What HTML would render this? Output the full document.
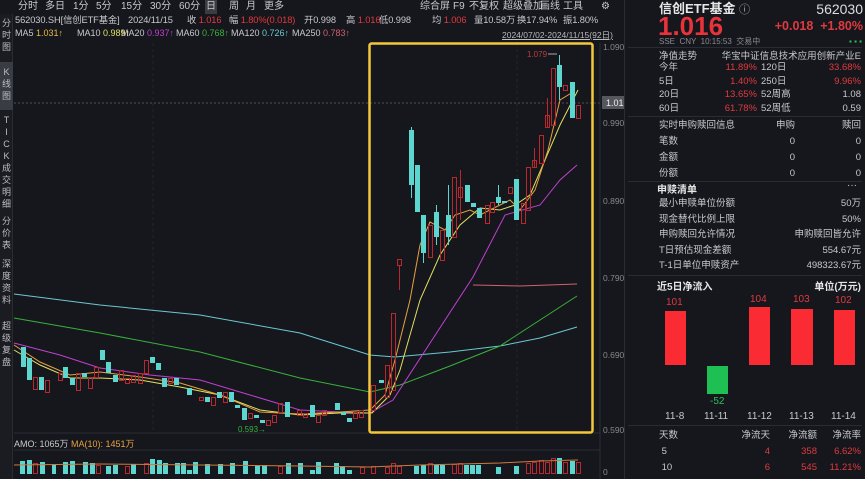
<!DOCTYPE html>
<html><head><meta charset="utf-8"><style>
*{margin:0;padding:0;box-sizing:border-box}
body{width:865px;height:479px;background:#15171d;overflow:hidden;position:relative;font-family:"Liberation Sans","Noto Sans CJK SC",sans-serif;color:#c8c9cc;font-size:10px}
.a{position:absolute;white-space:nowrap}
.r{color:#e03a3e}.g{color:#2fbf5a}.w{color:#e6e6e6}.gr{color:#8a8c92}
.side{position:absolute;left:0;top:14px;width:13px;height:465px;background:#1a1c22;border-right:1px solid #2a2c33}
.side div{position:absolute;left:0;width:13px;text-align:center;font-size:9px;line-height:12px;color:#bdbec2}
.rp{position:absolute;left:624px;top:0;width:241px;height:479px;background:#15171d;border-left:1px solid #2a2c33}
.hl{position:absolute;left:3px;right:3px;height:1px;background:#2a2c33}
.t{position:absolute;top:1px;font-size:10px;line-height:12px;white-space:nowrap}
.i{position:absolute;top:14px;font-size:9.3px;line-height:12px;white-space:nowrap;letter-spacing:-0.1px}
.m{position:absolute;top:28px;font-size:9px;line-height:11px;white-space:nowrap}
</style></head><body>
<div class="a" style="left:205px;top:0;width:12px;height:14px;background:#3a3c44"></div>
<span class="t" style="left:18px">分时</span><span class="t" style="left:45px">多日</span><span class="t" style="left:73px">1分</span><span class="t" style="left:96px">5分</span><span class="t" style="left:121px">15分</span><span class="t" style="left:150px">30分</span><span class="t" style="left:179px">60分</span><span class="t" style="left:206px">日</span><span class="t" style="left:229px">周</span><span class="t" style="left:246px">月</span><span class="t" style="left:264px">更多</span>
<span class="t" style="left:420px">综合屏</span><span class="t" style="left:453px">F9</span><span class="t" style="left:469px">不复权</span><span class="t" style="left:503px">超级叠加</span><span class="t" style="left:540px">画线</span><span class="t" style="left:563px">工具</span><span class="t" style="left:601px">⚙</span>
<span class="t" style="left:626px;color:#999">ⓘ &nbsp;›</span>
<span class="i" style="left:15px">562030.SH[信创ETF基金]</span><span class="i" style="left:128px">2024/11/15</span><span class="i" style="left:187px">收 <span class="r">1.016</span></span><span class="i" style="left:229px">幅 <span class="r">1.80%(0.018)</span></span><span class="i" style="left:304px">开0.998</span><span class="i" style="left:346px">高 <span class="r">1.016</span></span><span class="i" style="left:379px">低0.998</span><span class="i" style="left:432px">均 <span class="r">1.006</span></span><span class="i" style="left:474px">量10.58万</span><span class="i" style="left:517px">换17.94%</span><span class="i" style="left:563px">振1.80%</span>
<span class="m" style="left:15px">MA5 <span style="color:#e8b84a">1.031↑</span></span><span class="m" style="left:77px">MA10 <span style="color:#e0e060">0.989↑</span></span><span class="m" style="left:121px">MA20 <span style="color:#c040d0">0.937↑</span></span><span class="m" style="left:176px">MA60 <span style="color:#3ab03a">0.768↑</span></span><span class="m" style="left:231px">MA120 <span style="color:#6cc8d0">0.726↑</span></span><span class="m" style="left:292px">MA250 <span style="color:#d06070">0.783↑</span></span>
<div class="a" style="left:502px;top:29px;font-size:8.5px;text-decoration:underline;color:#bbb">2024/07/02-2024/11/15(92日)</div>
<div class="side">
<div style="top:3px;line-height:12px">分<br>时<br>图</div>
<div style="top:48px;height:48px;background:#3a3c44;padding-top:4px">K<br>线<br>图</div>
<div style="top:100px">T<br>I<br>C<br>K</div>
<div style="top:148px">成<br>交<br>明<br>细</div>
<div style="top:201px">分<br>价<br>表</div>
<div style="top:244px">深<br>度<br>资<br>料</div>
<div style="top:306px">超<br>级<br>复<br>盘</div>
</div>
<svg class="a" style="left:0;top:0" width="624" height="479" viewBox="0 0 624 479">
<line x1="14" y1="103" x2="600" y2="103" stroke="#666" stroke-dasharray="2,2" stroke-width="0.7"/>
<line x1="153" y1="43" x2="153" y2="433" stroke="#22242a" stroke-dasharray="3,3"/>
<line x1="517" y1="43" x2="517" y2="433" stroke="#22242a" stroke-dasharray="3,3"/>
<line x1="14" y1="433" x2="600" y2="433" stroke="#2c2e35"/>
<line x1="14" y1="450" x2="600" y2="450" stroke="#2c2e35"/>
<line x1="600" y1="43" x2="600" y2="479" stroke="#2c2e35"/>
<g fill="#888" font-size="8.5" font-family="Liberation Sans">
<text x="603" y="50">1.090</text><text x="603" y="126">0.990</text><text x="603" y="204">0.890</text><text x="603" y="281">0.790</text><text x="603" y="358">0.690</text><text x="603" y="433">0.590</text><text x="603" y="475">0</text></g>
<rect x="602" y="96" width="28" height="13" fill="#55575e"/><text x="606" y="106" fill="#eee" font-size="9" font-family="Liberation Sans">1.016</text>
<g fill="none" stroke-width="1">
<polyline stroke="#6cc8d0" points="14,294 100,305 200,315 300,333 370,355 395,357 450,352 500,346 540,338 577,327"/>
<polyline stroke="#3ab03a" points="14,318 100,333 200,352 300,378 370,392 400,385 450,366 500,346 540,320 577,296"/>
<polyline stroke="#d06070" points="473,285 520,286 577,284"/>
<polyline stroke="#c040d0" points="14,343 60,355 100,368 150,375 200,380 250,395 300,410 340,412 370,413 393,400 473,277 505,215 540,205 560,180 577,165"/>
<polyline stroke="#e0e060" points="14,350 40,365 70,378 100,378 140,380 180,387 220,395 260,410 300,415 340,413 372,413 390,395 400,370 420,300 440,255 460,225 480,208 500,210 515,205 530,195 545,160 560,125 578,90"/>
<polyline stroke="#e8a040" points="14,345 40,362 70,375 100,372 140,377 180,383 220,395 260,412 300,414 340,412 370,410 385,395 395,360 410,300 420,245 430,222 445,230 455,215 470,210 480,215 500,205 510,200 520,210 535,190 548,150 560,100 573,92"/>
</g>
<g fill="#5ed6d0">
<rect x="21" y="347" width="5" height="20"/><rect x="27" y="358" width="5" height="22"/><rect x="39" y="377" width="5" height="13"/><rect x="63" y="367" width="5" height="11"/><rect x="70" y="378" width="5" height="7"/><rect x="82" y="373" width="5" height="4"/><rect x="100" y="350" width="5" height="10"/><rect x="106" y="362" width="5" height="11"/><rect x="113" y="375" width="5" height="7"/><rect x="150" y="357" width="5" height="6"/><rect x="156" y="363" width="5" height="7"/><rect x="162" y="378" width="5" height="9"/><rect x="174" y="378" width="5" height="7"/><rect x="187" y="388" width="5" height="7"/><rect x="205" y="397" width="5" height="5"/><rect x="217" y="392" width="5" height="6"/><rect x="229" y="392" width="5" height="10"/><rect x="235" y="405" width="5" height="3"/><rect x="242" y="408" width="5" height="12"/><rect x="254" y="415" width="5" height="3"/><rect x="260" y="420" width="5" height="3"/><rect x="285" y="402" width="5" height="15"/><rect x="310" y="405" width="5" height="12"/><rect x="335" y="403" width="5" height="7"/><rect x="341" y="412" width="5" height="3"/><rect x="347" y="418" width="5" height="4"/>
<rect x="379" y="380" width="5" height="3"/><rect x="409" y="130" width="5" height="55"/><rect x="415" y="165" width="5" height="47"/><rect x="421" y="215" width="5" height="38"/><rect x="434" y="212" width="5" height="25"/><rect x="446" y="215" width="5" height="22"/><rect x="465" y="185" width="5" height="17"/><rect x="471" y="203" width="5" height="4"/><rect x="477" y="208" width="5" height="10"/><rect x="496" y="197" width="5" height="6"/><rect x="502" y="201" width="5" height="2"/><rect x="514" y="179" width="5" height="41"/><rect x="557" y="65" width="5" height="22"/><rect x="570" y="82" width="5" height="36"/>
</g>
<g stroke="#5ed6d0" stroke-width="1"><line x1="411.5" y1="127" x2="411.5" y2="198"/><line x1="423.5" y1="253" x2="423.5" y2="263"/><line x1="436.5" y1="205" x2="436.5" y2="245"/><line x1="448.5" y1="185" x2="448.5" y2="245"/><line x1="559.5" y1="55" x2="559.5" y2="100"/><line x1="498.5" y1="185" x2="498.5" y2="205"/></g>
<g fill="none" stroke="#b8282e" stroke-width="1">
<rect x="33.5" y="377.5" width="4" height="12"/><rect x="45.5" y="380.5" width="4" height="12"/><rect x="58.5" y="373.5" width="4" height="7"/><rect x="76.5" y="373.5" width="4" height="17"/><rect x="88.5" y="377.5" width="4" height="11"/><rect x="94.5" y="367.5" width="4" height="10"/><rect x="119.5" y="370.5" width="4" height="10"/><rect x="125.5" y="378.5" width="4" height="5"/><rect x="131.5" y="375.5" width="4" height="7"/><rect x="138.5" y="373.5" width="4" height="10"/><rect x="144.5" y="360.5" width="4" height="13"/><rect x="168.5" y="378.5" width="4" height="5"/><rect x="199.5" y="397.5" width="4" height="3"/><rect x="211.5" y="397.5" width="4" height="8"/><rect x="223.5" y="392.5" width="4" height="10"/><rect x="248.5" y="413.5" width="4" height="5"/><rect x="266.5" y="420.5" width="4" height="5"/><rect x="272.5" y="415.5" width="4" height="7"/><rect x="278.5" y="403.5" width="4" height="9"/><rect x="297.5" y="410.5" width="4" height="5"/><rect x="303.5" y="413.5" width="4" height="4"/><rect x="316.5" y="415.5" width="4" height="7"/><rect x="322.5" y="410.5" width="4" height="5"/><rect x="353.5" y="412.5" width="4" height="6"/><rect x="359.5" y="410.5" width="4" height="7"/>
<rect x="371.5" y="385.5" width="4" height="25"/><rect x="385.5" y="365.5" width="4" height="32"/><rect x="391.5" y="313.5" width="4" height="77"/><rect x="397.5" y="259.5" width="4" height="6"/><rect x="428.5" y="225.5" width="4" height="32"/><rect x="440.5" y="230.5" width="4" height="30"/><rect x="452.5" y="177.5" width="4" height="60"/><rect x="458.5" y="187.5" width="4" height="10"/><rect x="485.5" y="205.5" width="4" height="18"/><rect x="490.5" y="202.5" width="4" height="10"/><rect x="508.5" y="187.5" width="4" height="6"/><rect x="521.5" y="203.5" width="4" height="20"/><rect x="526.5" y="167.5" width="4" height="43"/><rect x="532.5" y="160.5" width="4" height="7"/><rect x="539.5" y="135.5" width="4" height="28"/><rect x="545.5" y="115.5" width="4" height="12"/><rect x="551.5" y="68.5" width="4" height="57"/><rect x="563.5" y="85.5" width="4" height="5"/><rect x="576.5" y="105.5" width="4" height="13"/>
<line x1="399.5" y1="266" x2="399.5" y2="290"/><line x1="460.5" y1="170" x2="460.5" y2="220"/><line x1="547.5" y1="98" x2="547.5" y2="128"/><line x1="534.5" y1="148" x2="534.5" y2="168"/>
</g>
<text x="527" y="57" fill="#c03a3e" font-size="8" font-family="Liberation Sans">1.079</text><line x1="548" y1="54" x2="557" y2="54" stroke="#aaa"/>
<text x="238" y="432" fill="#3ab03a" font-size="8" font-family="Liberation Sans">0.593→</text>
<rect x="369.5" y="43.5" width="223" height="389" fill="none" stroke="#f3c73a" stroke-width="2.5" rx="2"/>
<g fill="#5ed6d0">
<rect x="20" y="461" width="5" height="13"/><rect x="27" y="460" width="5" height="14"/><rect x="40" y="462" width="5" height="12"/><rect x="52" y="465" width="4" height="9"/><rect x="63" y="462" width="5" height="12"/><rect x="70" y="461" width="5" height="13"/><rect x="83" y="462" width="5" height="12"/><rect x="90" y="463" width="5" height="11"/><rect x="106" y="466" width="5" height="8"/><rect x="113" y="465" width="5" height="9"/><rect x="131" y="464" width="5" height="10"/><rect x="150" y="459" width="5" height="15"/><rect x="157" y="460" width="5" height="14"/><rect x="163" y="463" width="5" height="11"/><rect x="175" y="463" width="5" height="11"/><rect x="181" y="463" width="5" height="11"/><rect x="187" y="470" width="5" height="4"/><rect x="193" y="462" width="5" height="12"/><rect x="205" y="464" width="5" height="10"/><rect x="218" y="464" width="5" height="10"/><rect x="230" y="463" width="5" height="11"/><rect x="243" y="461" width="5" height="13"/><rect x="255" y="465" width="5" height="9"/><rect x="262" y="465" width="5" height="9"/><rect x="286" y="463" width="5" height="11"/><rect x="298" y="463" width="5" height="11"/><rect x="310" y="470" width="5" height="4"/><rect x="316" y="462" width="5" height="12"/><rect x="334" y="463" width="5" height="11"/><rect x="340" y="466" width="5" height="8"/><rect x="347" y="470" width="5" height="4"/>
<rect x="414" y="466" width="5" height="8"/><rect x="421" y="465" width="5" height="9"/><rect x="434" y="465" width="5" height="9"/><rect x="440" y="465" width="5" height="9"/><rect x="464" y="465" width="5" height="9"/><rect x="470" y="465" width="5" height="9"/><rect x="476" y="465" width="5" height="9"/><rect x="496" y="467" width="5" height="7"/><rect x="514" y="466" width="5" height="8"/><rect x="557" y="458" width="5" height="16"/><rect x="570" y="461" width="5" height="13"/>
</g>
<g fill="none" stroke="#b8282e"><rect x="33.5" y="463.5" width="4" height="10"/><rect x="96.5" y="465.5" width="4" height="8"/><rect x="125.5" y="466.5" width="4" height="7"/><rect x="144.5" y="463.5" width="4" height="10"/><rect x="278.5" y="466.5" width="4" height="7"/><rect x="360.5" y="467.5" width="4" height="6"/><rect x="371.5" y="466.5" width="4" height="7"/><rect x="385.5" y="467.5" width="4" height="6"/><rect x="391.5" y="463.5" width="4" height="10"/><rect x="397.5" y="466.5" width="4" height="7"/><rect x="428.5" y="463.5" width="4" height="10"/><rect x="452.5" y="464.5" width="4" height="9"/><rect x="458.5" y="463.5" width="4" height="10"/><rect x="526.5" y="463.5" width="4" height="10"/><rect x="532.5" y="462.5" width="4" height="11"/><rect x="539.5" y="460.5" width="4" height="13"/><rect x="545.5" y="462.5" width="4" height="11"/><rect x="551.5" y="458.5" width="4" height="15"/><rect x="563.5" y="462.5" width="4" height="11"/><rect x="576.5" y="462.5" width="4" height="11"/></g>
<polyline fill="none" stroke="#d07a40" points="14,465 100,464 200,465 300,466 370,467 420,465 500,463 540,461 578,460"/>
</svg>
<div class="a" style="left:14px;top:437px;font-size:9px">AMO: 1065万 <span style="color:#e8a040">MA(10): 1451万</span></div>
<div class="rp">
<div class="a w" style="left:34px;top:1px;font-size:13px;line-height:15px;font-weight:bold">信创ETF基金 <span style="font-weight:normal;font-size:11px;color:#aaa">ⓘ</span></div>
<div class="a" style="right:2px;top:1px;font-size:14px;line-height:16px;color:#ddd">562030</div>
<div class="a r" style="left:33px;top:15px;font-size:26px;line-height:22px;font-weight:bold;color:#e8333a">1.016</div>
<div class="a r" style="right:2px;top:19px;font-size:12.5px;line-height:14px;font-weight:bold">+0.018 &nbsp;+1.80%</div>
<div class="a gr" style="left:34px;top:37px;font-size:8px;line-height:10px">SSE &nbsp;CNY &nbsp;10:15:53 &nbsp;交易中</div>
<div class="a" style="right:3px;top:37px;font-size:8px;line-height:10px;color:#2fbf5a">▪ ▪ ▪</div>
<div class="hl" style="top:47px"></div>
<div class="a" style="left:34px;top:48px;font-size:9.5px">净值走势</div>
<div class="a" style="right:4px;top:48px;font-size:9.5px">华宝中证信息技术应用创新产业E</div>
<div class="a" style="left:34px;top:61px;line-height:13.7px;font-size:9.5px">今年<br>5日<br>20日<br>60日</div>
<div class="a r" style="left:90px;width:42px;text-align:right;top:61px;line-height:13.7px;font-size:9.5px">11.89%<br>1.40%<br>13.65%<br>61.78%</div>
<div class="a" style="left:136px;top:61px;line-height:13.7px;font-size:9.5px">120日<br>250日<br>52周高<br>52周低</div>
<div class="a" style="right:4px;text-align:right;top:61px;line-height:13.7px;font-size:9.5px"><span class="r">33.68%</span><br><span class="r">9.96%</span><br>1.08<br>0.59</div>
<div class="hl" style="top:116px"></div>
<div class="a" style="left:34px;top:118px;line-height:16px;font-size:9.5px">实时申购赎回信息<br>笔数<br>金额<br>份额</div>
<div class="a" style="left:140px;width:30px;text-align:right;top:118px;line-height:16px;font-size:9.5px">申购<br>0<br>0<br>0</div>
<div class="a" style="right:4px;text-align:right;top:118px;line-height:16px;font-size:9.5px">赎回<br>0<br>0<br>0</div>
<div class="hl" style="top:181px"></div>
<div class="a w" style="left:32px;top:181px;font-size:10px;font-weight:bold">申赎清单</div>
<div class="a" style="right:8px;top:180px">···</div>
<div class="a" style="left:34px;top:196px;line-height:15.5px;font-size:9.5px">最小申赎单位份额<br>现金替代比例上限<br>申购赎回允许情况<br>T日预估现金差额<br>T-1日单位申赎资产</div>
<div class="a" style="right:4px;text-align:right;top:196px;line-height:15.5px;font-size:9.5px">50万<br>50%<br>申购赎回皆允许<br>554.67元<br>498323.67元</div>
<div class="hl" style="top:275px"></div>
<div class="a w" style="left:32px;top:278px;font-size:10px;font-weight:bold">近5日净流入</div>
<div class="a w" style="right:4px;top:278px;font-size:10px;font-weight:bold">单位(万元)</div>
<div class="a" style="left:40px;top:311px;width:21px;height:54px;background:#fa2b32"></div>
<div class="a" style="left:82px;top:366px;width:21px;height:28px;background:#1fc053"></div>
<div class="a" style="left:124px;top:307px;width:21px;height:58px;background:#fa2b32"></div>
<div class="a" style="left:166px;top:309px;width:22px;height:56px;background:#fa2b32"></div>
<div class="a" style="left:209px;top:310px;width:21px;height:55px;background:#fa2b32"></div>
<div class="a r" style="left:41px;top:297px;font-size:10px">101</div>
<div class="a r" style="left:125px;top:294px;font-size:10px">104</div>
<div class="a r" style="left:168px;top:294px;font-size:10px">103</div>
<div class="a r" style="left:210px;top:295px;font-size:10px">102</div>
<div class="a g" style="left:85px;top:396px;font-size:10px">-52</div>
<div class="a" style="left:40px;top:411px;font-size:10px">11-8</div>
<div class="a" style="left:79px;top:411px;font-size:10px">11-11</div>
<div class="a" style="left:122px;top:411px;font-size:10px">11-12</div>
<div class="a" style="left:164px;top:411px;font-size:10px">11-13</div>
<div class="a" style="left:206px;top:411px;font-size:10px">11-14</div>
<div class="hl" style="top:425px"></div>
<div class="a" style="left:34px;top:428px;line-height:16px;font-size:9.5px">天数<br>&nbsp;5<br>&nbsp;10</div>
<div class="a" style="left:100px;width:45px;text-align:right;top:428px;line-height:16px;font-size:9.5px">净流天<br><span class="r">4</span><br><span class="r">6</span></div>
<div class="a" style="left:150px;width:42px;text-align:right;top:428px;line-height:16px;font-size:9.5px">净流额<br><span class="r">358</span><br><span class="r">545</span></div>
<div class="a" style="right:4px;text-align:right;top:428px;line-height:16px;font-size:9.5px">净流率<br><span class="r">6.62%</span><br><span class="r">11.21%</span></div>
</div>
</body></html>
